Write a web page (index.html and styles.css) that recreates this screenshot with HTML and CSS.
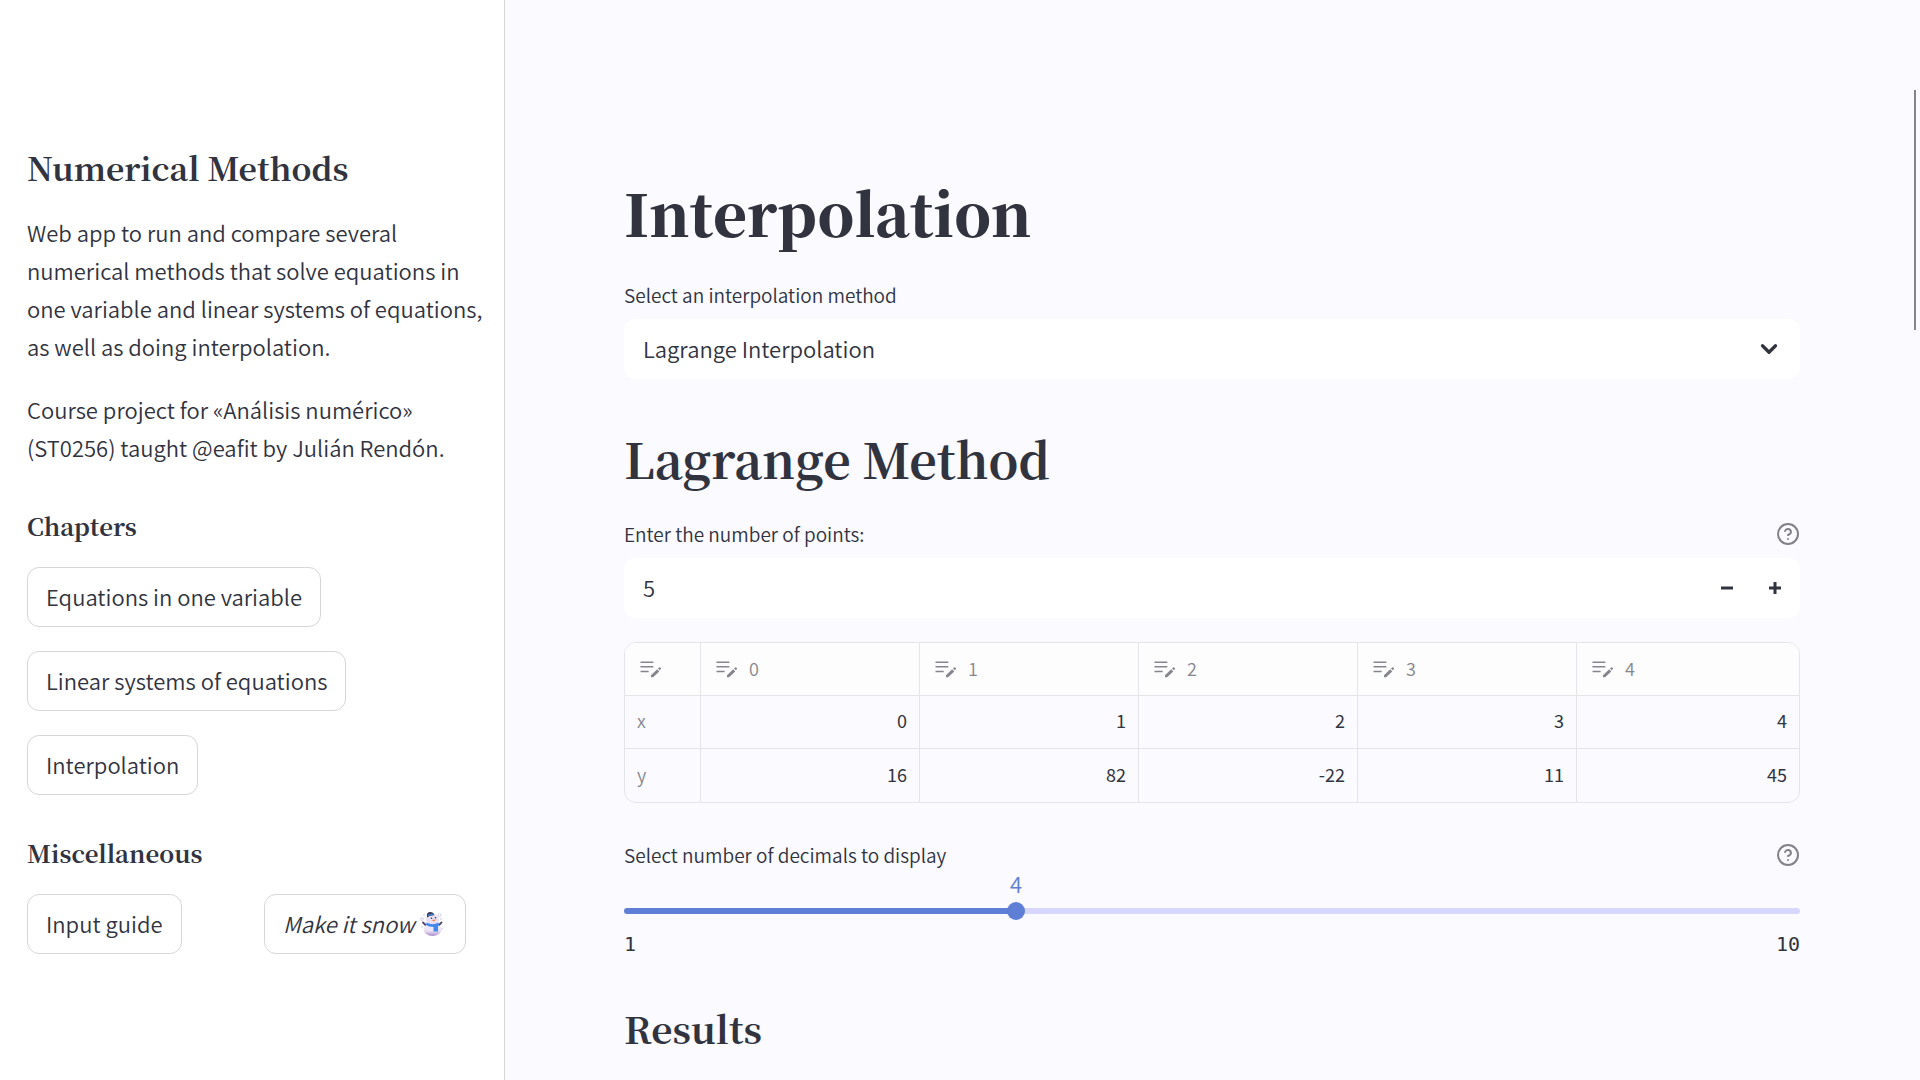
FILE: index.html
```html
<!DOCTYPE html>
<html lang="en">
<head>
<meta charset="utf-8">
<meta name="viewport" content="width=device-width, initial-scale=1">
<title>Numerical Methods</title>
<link rel="stylesheet" href="styles.css">
</head>
<body>
<svg class="sprite" aria-hidden="true">
  <symbol id="edit-note" viewBox="0 0 24 24">
    <path d="M3 7h11M3 11h11M3 15h7" stroke="currentColor" stroke-width="1.3" fill="none"/>
    <path d="M12 20v-1.7l5.3-5.2 1.8 1.8-5.3 5.1zM18 12.4l.9-.8q.5-.4 1 0l.5.5q.5.5 0 1l-.8.9z" fill="currentColor"/>
  </symbol>
  <symbol id="help" viewBox="0 0 24 24">
    <g fill="none" stroke="currentColor" stroke-width="2" stroke-linecap="round" stroke-linejoin="round">
      <circle cx="12" cy="12" r="10"/>
      <path d="M9.09 9a3 3 0 0 1 5.83 1c0 2-3 3-3 3M12 17h.01"/>
    </g>
  </symbol>
</svg>
<div class="app">
  <aside class="sidebar">
    <h2 class="sidebar-title">Numerical Methods</h2>
    <p class="sidebar-text">Web app to run and compare several numerical methods that solve equations in one variable and linear systems of equations, as well as doing interpolation.</p>
    <p class="sidebar-text">Course project for «Análisis numérico» (ST0256) taught @eafit by Julián Rendón.</p>
    <h3 class="sidebar-heading">Chapters</h3>
    <nav class="chapters">
      <button class="btn" type="button">Equations in one variable</button>
      <button class="btn" type="button">Linear systems of equations</button>
      <button class="btn" type="button">Interpolation</button>
    </nav>
    <h3 class="sidebar-heading">Miscellaneous</h3>
    <div class="misc">
      <div><button class="btn" type="button">Input guide</button></div>
      <div><button class="btn" type="button"><em>Make it snow</em>
        <svg class="snowman" viewBox="0 0 30 30" aria-hidden="true">
          <defs>
            <linearGradient id="snow" x1="0" y1="0" x2="0" y2="1"><stop offset="0" stop-color="#f6f2fb"/><stop offset=".6" stop-color="#ebe2f5"/><stop offset="1" stop-color="#a98acb"/></linearGradient>
          </defs>
          <g fill="none" stroke="#d5cfee" stroke-width="1"><circle cx="5" cy="11" r="1.4"/><circle cx="22.500" cy="7" r="1.500"/></g>
          <g fill="#ddd8f0"><circle cx="7" cy="7" r="1"/><circle cx="24" cy="11" r="1"/><circle cx="5" cy="19" r="1"/><circle cx="25" cy="21" r="1"/></g>
          <path d="M6 14.500l3 3M24.500 14.500l-3 3" stroke="#55456e" stroke-width="1.800" stroke-linecap="round"/>
          <ellipse cx="15.500" cy="21.500" rx="9" ry="6.500" fill="url(#snow)"/>
          <circle cx="15.500" cy="12" r="6.500" fill="#e9e1f3"/>
          <path d="M10 8q-.5-3.500 2.500-4 3-.5 4.300 1.800l.5 1.600q-3.500-.3-7.300 2z" fill="#3f3d59"/>
          <path d="M11 7.500l5.500-1.300" stroke="#3b7fd4" stroke-width="1.300"/>
          <circle cx="14.500" cy="10.300" r=".8" fill="#403550"/><circle cx="18.500" cy="9.800" r=".8" fill="#403550"/>
          <path d="M14.500 12l4.500-.5-2 2z" fill="#f0803c"/>
          <path d="M9.500 14.500q6 3.500 12 0l.5 3-1 1v5h-4.500v-4.500q-5 0-7.500-2z" fill="#4288ea"/>
        </svg></button></div>
    </div>
  </aside>

  <main class="main">
    <h1 class="page-title">Interpolation</h1>

    <label class="label" for="method">Select an interpolation method</label>
    <div class="field">
      <select class="select" id="method"><option>Lagrange Interpolation</option></select>
      <svg class="chevron" viewBox="0 0 24 24" aria-hidden="true"><path d="M6 9l6 6 6-6"/></svg>
    </div>

    <h2 class="section-title">Lagrange Method</h2>

    <div class="label-row">
      <label class="label" for="points">Enter the number of points:</label>
      <svg class="help" aria-hidden="true"><use href="#help"/></svg>
    </div>
    <div class="field">
      <input class="number" id="points" type="number" value="5">
      <button class="step" type="button" aria-label="Decrease"><svg viewBox="0 0 12 12"><path d="M0 6h12"/></svg></button>
      <button class="step" type="button" aria-label="Increase"><svg viewBox="0 0 12 12"><path d="M0 6h12M6 0v12"/></svg></button>
    </div>

    <div class="grid">
      <table class="table">
        <thead>
          <tr>
            <th class="index"><span class="head"><svg class="note"><use href="#edit-note"/></svg></span></th>
            <th><span class="head"><svg class="note"><use href="#edit-note"/></svg>0</span></th>
            <th><span class="head"><svg class="note"><use href="#edit-note"/></svg>1</span></th>
            <th><span class="head"><svg class="note"><use href="#edit-note"/></svg>2</span></th>
            <th><span class="head"><svg class="note"><use href="#edit-note"/></svg>3</span></th>
            <th class="last"><span class="head"><svg class="note"><use href="#edit-note"/></svg>4</span></th>
          </tr>
        </thead>
        <tbody>
          <tr><th>x</th><td>0</td><td>1</td><td>2</td><td>3</td><td>4</td></tr>
          <tr><th>y</th><td>16</td><td>82</td><td>-22</td><td>11</td><td>45</td></tr>
        </tbody>
      </table>
    </div>

    <div class="label-row">
      <label class="label" for="decimals">Select number of decimals to display</label>
      <svg class="help" aria-hidden="true"><use href="#help"/></svg>
    </div>
    <div class="slider" style="--value: 33.333%">
      <output class="slider-value" for="decimals">4</output>
      <div class="track"><input class="range" id="decimals" type="range" min="1" max="10" value="4"></div>
      <div class="ticks"><span>1</span><span>10</span></div>
    </div>

    <h3 class="results-title">Results</h3>
    <div class="scroll-thumb"></div>
  </main>
</div>
</body>
</html>
```
FILE: styles.css
```css
* { box-sizing: border-box; }

:root {
  --text: #31333f;
  --primary: #5f7fd6;
  --page: #fafaff;
  --line: #e4e4e9;
  --sans: "Noto Sans CJK SC", "Noto Sans", sans-serif;
  --serif: "Noto Serif CJK SC", "Liberation Serif", serif;
  --mono: "DejaVu Sans Mono", monospace;
}

body {
  margin: 0;
  background: var(--page);
  color: var(--text);
  font-family: var(--sans);
  font-size: 22px;
  font-weight: 350;
  line-height: 38px;
}

h1, h2, h3, p { margin: 0; }
h1, h2, h3 { font-family: var(--serif); font-weight: 700; }

button, input, select { font: inherit; color: inherit; }

.sprite { display: none; }

.app {
  display: flex;
  height: 100vh;
  overflow: hidden;
}

.sidebar {
  flex: none;
  width: 505px;
  padding: 142px 15px 0 27px;
  background: #fff;
  border-right: 1px solid #d6d6d9;
}

.sidebar-title { font-size: 32px; line-height: 50px; margin-bottom: 21px; }
.sidebar-text { margin-bottom: 25px; }
.sidebar-heading { font-size: 24px; line-height: 36px; padding-top: 17px; margin-bottom: 23px; }

.chapters {
  display: flex;
  flex-direction: column;
  align-items: flex-start;
  gap: 24px;
  margin-bottom: 23px;
}

.misc {
  display: grid;
  grid-template-columns: 1fr 1fr;
  gap: 24px;
  padding-right: 12px;
}

.btn {
  display: inline-flex;
  align-items: center;
  gap: 2px;
  height: 60px;
  padding: 0 18px 2px;
  background: #fff;
  border: 1px solid #d6d6d9;
  border-radius: 12px;
  white-space: nowrap;
}

.snowman { width: 30px; height: 30px; }

.main {
  position: relative;
  flex: 1;
  padding: 170px 120px 0 119px;
}

.page-title { font-size: 58px; font-weight: 900; line-height: 84px; margin-bottom: 26px; }
.section-title { font-size: 48px; line-height: 64px; margin: 48px 0 28px; }
.results-title { font-size: 37px; line-height: 50px; margin-top: 41px; }

.label { display: block; font-size: 19px; line-height: 30px; margin-bottom: 9px; }

.label-row {
  display: flex;
  justify-content: space-between;
}

.help { width: 24px; height: 24px; margin: 3px 0; color: #808288; }

.field {
  display: flex;
  align-items: center;
  position: relative;
  height: 60px;
  padding-right: 1px;
  background: #fff;
  border-radius: 12px;
}

.select, .number {
  flex: 1;
  min-width: 0;
  height: 60px;
  padding: 0 19px 2px;
  background: none;
  border: 0;
  outline: 0;
  appearance: none;
}

.number { -moz-appearance: textfield; }
.number::-webkit-inner-spin-button { appearance: none; }

.chevron {
  position: absolute;
  right: 18px;
  width: 26px;
  height: 26px;
  fill: none;
  stroke: var(--text);
  stroke-width: 3;
  stroke-linecap: round;
  stroke-linejoin: round;
  pointer-events: none;
}

.step {
  display: grid;
  place-items: center;
  width: 48px;
  height: 60px;
  padding: 0;
  background: none;
  border: 0;
}

.step svg { width: 12px; height: 12px; stroke: var(--text); stroke-width: 3; }

.grid {
  margin: 24px 0 37px;
  border: 1px solid var(--line);
  border-radius: 12px;
  overflow: hidden;
}

.table {
  width: 100%;
  table-layout: fixed;
  border-collapse: separate;
  border-spacing: 0;
  font-size: 18px;
  line-height: 24px;
}

.table th, .table td {
  height: 53px;
  padding: 0 12px 4px;
  border-right: 1px solid var(--line);
  border-bottom: 1px solid var(--line);
  font-weight: 350;
}

.table th { text-align: left; color: #85868d; }
.table td { text-align: right; font-weight: 400; }
.table thead th { padding-bottom: 2px; background: #fdfdfe; }
.table .index { width: 76px; }
.table .last { width: 222px; }
.table tr > :last-child { border-right: 0; }
.table tbody tr:last-child > * { border-bottom: 0; }

.head { display: flex; align-items: center; gap: 8px; }
.note { width: 28px; height: 28px; }

.slider { position: relative; padding-top: 29px; }

.slider-value {
  position: absolute;
  top: -11px;
  left: var(--value);
  transform: translateX(-50%);
  color: var(--primary);
  line-height: 30px;
}

.track {
  height: 6px;
  border-radius: 3px;
  background: linear-gradient(to right, var(--primary) var(--value), #d6d6ff var(--value));
}

.range {
  display: block;
  width: calc(100% + 18px);
  height: 6px;
  margin: 0 -9px;
  background: none;
  appearance: none;
}

.range::-webkit-slider-thumb {
  width: 18px;
  height: 18px;
  border-radius: 50%;
  background: var(--primary);
  appearance: none;
}

.ticks {
  display: flex;
  justify-content: space-between;
  margin-top: 12px;
  font-family: var(--mono);
  font-size: 20px;
  line-height: 36px;
}

.scroll-thumb {
  position: absolute;
  top: 90px;
  right: 4px;
  width: 2px;
  height: 240px;
  background: #858588;
}
```
